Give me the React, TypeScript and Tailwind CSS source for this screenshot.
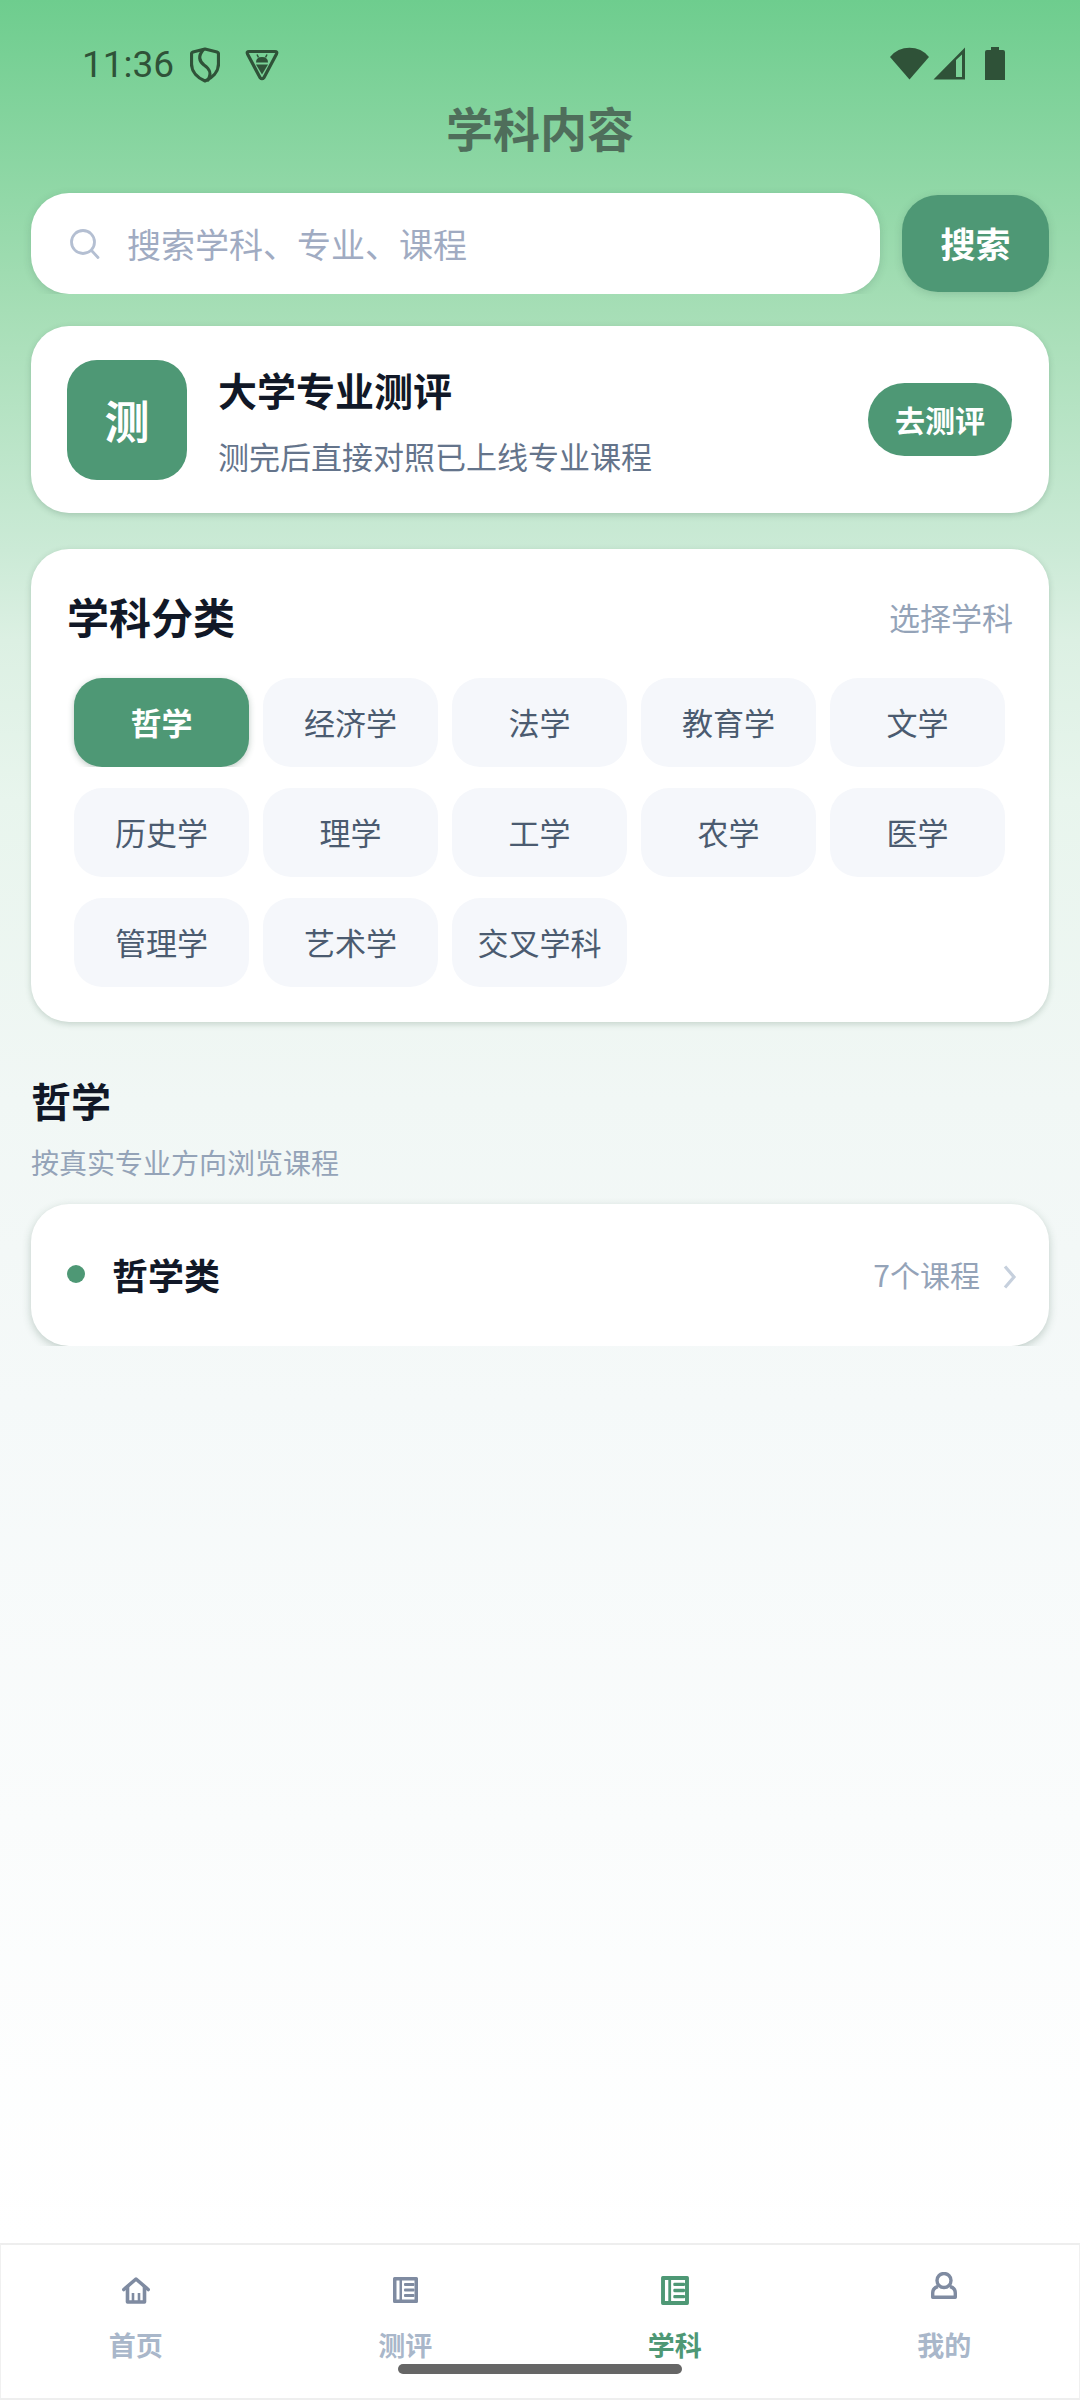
const chips = ["哲学","经济学","法学","教育学","文学","历史学","理学","工学","农学","医学","管理学","艺术学","交叉学科"];
const cjk = { fontFamily: '"Noto Sans CJK SC", "Noto Sans", sans-serif' };

function Shield() {
  return (
    <svg width="30" height="36" viewBox="0 0 30 36" fill="none" stroke="#2f5238" strokeWidth="3.2" strokeLinejoin="round" strokeLinecap="round">
      <path d="M15 2 L27 5 Q28.5 5.500 28.5 7 V17 C28.5 25 22 31 15 34 C8 31 1.500 25 1.500 17 V7 Q1.500 5.500 3 5 Z" />
      <path d="M13 3 C8 9 9 14 14 18 C20 22 22 26 18 33" />
    </svg>
  );
}
function TriDroid() {
  return (
    <svg width="34" height="32" viewBox="0 0 34 32" fill="none">
      <path d="M4 2.500 H30 Q32.500 2.500 31.500 5 L19 28.500 Q17 31 15 28.500 L2.500 5 Q1.500 2.500 4 2.500 Z" stroke="#2f5238" strokeWidth="3.200" strokeLinejoin="round" />
      <path d="M11 13.500 Q11 8 17 8 Q23 8 23 13.500 Z" fill="#2f5238" />
      <path d="M11 15.500 H23 L17 25.500 Z" fill="#2f5238" />
      <path d="M12 5.500 L13.500 8.500 M22 5.500 L20.500 8.500" stroke="#2f5238" strokeWidth="1.500" />
    </svg>
  );
}
function StatusRight() {
  return (
    <div className="flex items-center">
      <svg width="39" height="33" viewBox="0 0 39 33"><path d="M19.500 32.500 L0 10 A25 25 0 0 1 39 10 Z" fill="#2f5238" /></svg>
      <svg className="ml-[4px]" width="33" height="33" viewBox="0 0 33 33">
        <path d="M32 0.500 V32.500 H0.500 Z M23 13 V30 H29 V7.500 Z" fillRule="evenodd" fill="#2f5238" />
      </svg>
      <svg className="ml-[19px]" width="20" height="33" viewBox="0 0 20 33">
        <path d="M6 0 H14 V3 H18 Q20 3 20 5 V33 H0 V5 Q0 3 2 3 H6 Z" fill="#2f5238" />
      </svg>
    </div>
  );
}
function SearchIcon() {
  return (
    <svg width="30" height="30" viewBox="0 0 30 30" fill="none" stroke="#b4bfd2" strokeWidth="2.800" strokeLinecap="round">
      <circle cx="13" cy="13" r="11.500" />
      <path d="M21.500 21.500 L28 28.500" />
    </svg>
  );
}
function HomeIcon() {
  return (
    <svg width="28" height="27" viewBox="0 0 28 27" fill="none" stroke="#7f8ba1" strokeWidth="3.600" strokeLinejoin="round" strokeLinecap="round">
      <path d="M1.800 12.500 L14 2 L26.200 12.500" />
      <path d="M5.500 10 V25 H22.500 V10" />
      <path d="M11 25 V16 M17 25 V16" strokeWidth="2.600" strokeLinecap="butt" />
    </svg>
  );
}
function BookIcon({ color, w, h }: { color: string; w: number; h: number }) {
  return (
    <svg width={w} height={h} viewBox="0 0 25 26">
      <path fillRule="evenodd" fill={color} d="M1.500 0 H23.500 Q25 0 25 1.500 V24.500 Q25 26 23.500 26 H1.500 Q0 26 0 24.500 V1.500 Q0 0 1.500 0 Z M3.500 3.500 V22.500 H6.500 V3.500 Z M9 3.500 V22.500 H21.500 V3.500 Z" />
      <rect x="11" y="6" width="10.500" height="3" rx="1" fill={color} />
      <rect x="11" y="11.500" width="10.500" height="3" rx="1" fill={color} />
      <rect x="11" y="17" width="10.500" height="3" rx="1" fill={color} />
    </svg>
  );
}
function UserIcon() {
  return (
    <svg className="-translate-y-[5px]" width="26" height="27" viewBox="0 0 26 27" fill="none" stroke="#7f8ba1" strokeWidth="3.400">
      <circle cx="13" cy="8.500" r="7" />
      <path d="M7 14.500 Q1.700 16 1.700 21 V25.300 H24.300 V21 Q24.300 16 19 14.500" strokeLinejoin="round" />
    </svg>
  );
}
function Chevron() {
  return (
    <svg width="15" height="24" viewBox="0 0 15 24" fill="none" stroke="#c6d0dd" strokeWidth="3.200" strokeLinejoin="miter">
      <path d="M3 1.500 L12 12 L3 22.500" />
    </svg>
  );
}

export default function App() {
  return (
    <div
      className="relative flex h-[2400px] w-[1080px] flex-col overflow-hidden bg-[linear-gradient(180deg,#6ecd8e_0px,#a6deb6_310px,#cbead6_550px,#dcf0e3_640px,#e8f5ed_800px,#f1f7f5_1100px,#f5f9f9_1400px,#ffffff_2240px)]"
      style={cjk}
    >
      <div className="flex h-[100px] items-start justify-between pl-[82px] pr-[75px] pt-[47px]">
        <div className="flex items-center">
          <span className="w-[108px] text-[37px] leading-[34px] text-[#2f5238]" style={{ fontFamily: "Roboto, sans-serif" }}>11:36</span>
          <Shield />
          <span className="ml-[25px] flex"><TriDroid /></span>
        </div>
        <StatusRight />
      </div>
      <h1 className="-mt-[3px] mb-[3px] h-[60px] text-center text-[47px] font-bold leading-[60px] text-[#4f6e5b]">学科内容</h1>

      <div className="flex flex-col px-[31px]">
        <div className="mt-[33px] flex items-center">
          <div className="flex h-[101px] flex-1 items-center rounded-[38px] bg-white pl-[39px] shadow-[0_2px_8px_rgba(40,80,60,0.18)] [clip-path:inset(-12px_-12px_0_-12px)]">
            <SearchIcon />
            <span className="ml-[27px] text-[34px] leading-none text-[#a0abc2]">搜索学科、专业、课程</span>
          </div>
          <button className="ml-[22px] h-[97px] w-[147px] rounded-[36px] bg-[#4e9875] text-[35px] font-bold text-white shadow-[0_2px_8px_rgba(40,80,60,0.18)]">搜索</button>
        </div>

        <div className="mt-[32px] flex h-[187px] items-center rounded-[38px] bg-white pl-[36px] pr-[37px] shadow-[0_2px_6px_rgba(40,80,60,0.22)]">
          <div className="flex h-[120px] w-[120px] items-center justify-center rounded-[30px] bg-[#4e9875] text-[45px] font-bold text-white">测</div>
          <div className="ml-[31px] flex-1">
            <div className="text-[39px] font-bold leading-[50px] text-[#111827]">大学专业测评</div>
            <div className="mt-[22px] text-[31px] leading-[40px] text-[#64748b]">测完后直接对照已上线专业课程</div>
          </div>
          <button className="h-[73px] w-[144px] rounded-full bg-[#4e9875] text-[30px] font-bold text-white">去测评</button>
        </div>

        <div className="mt-[36px] h-[473px] rounded-[38px] bg-white px-[36px] pt-[39px] shadow-[0_2px_6px_rgba(40,80,60,0.22)]">
          <div className="flex h-[56px] items-center justify-between">
            <span className="text-[42px] font-bold leading-none text-[#111827]">学科分类</span>
            <span className="text-[31px] leading-none text-[#94a3b8]">选择学科</span>
          </div>
          <div className="mx-[7px] mt-[34px] grid grid-cols-[repeat(5,175px)] gap-x-[14px] gap-y-[21px]">
            {chips.map((c, i) => (
              <div
                key={c}
                className={
                  i === 0
                    ? "flex h-[89px] items-center justify-center rounded-[28px] bg-[#4e9875] text-[31px] font-bold text-white shadow-[0_2px_6px_rgba(40,80,60,0.3)] [clip-path:inset(-10px_-10px_0_-10px)]"
                    : "flex h-[89px] items-center justify-center rounded-[28px] bg-[#f5f7fb] text-[31px] text-[#4b5b70]"
                }
              >
                {c}
              </div>
            ))}
          </div>
        </div>

        <h2 className="mt-[50px] text-[40px] font-bold leading-[56px] text-[#111827]">哲学</h2>
        <p className="mt-[14px] text-[28px] leading-[40px] text-[#94a3b8]">按真实专业方向浏览课程</p>

        <div className="mx-[-31px] mt-[2px] overflow-hidden px-[31px] pt-[20px]">
          <div className="flex h-[142px] items-center rounded-[38px] bg-white pb-[3px] pl-[36px] pr-[32px] shadow-[0_3px_8px_rgba(40,80,60,0.25)]">
            <span className="h-[18px] w-[18px] rounded-full bg-[#4e9875]" />
            <span className="ml-[27px] flex-1 text-[36px] font-bold leading-none text-[#111827]">哲学类</span>
            <span className="text-[30px] leading-none text-[#94a3b8]">7个课程</span>
            <span className="ml-[22px] mt-[7px] flex"><Chevron /></span>
          </div>
        </div>
      </div>

      <nav className="mt-auto grid h-[157px] grid-cols-4 border-x border-y-2 border-x-[#f0f0f0] border-y-[#eeeeee] bg-white">
        {[
          { l: "首页", i: <HomeIcon />, c: "text-[#a9b7ca]" },
          { l: "测评", i: <BookIcon color="#7f8ba1" w={25} h={26} />, c: "text-[#a9b7ca]" },
          { l: "学科", i: <BookIcon color="#4e9875" w={28} h={29} />, c: "text-[#4e9875]" },
          { l: "我的", i: <UserIcon />, c: "text-[#a9b7ca]" },
        ].map((t) => (
          <div key={t.l} className="flex flex-col items-center">
            <div className="mt-[28px] flex h-[34px] items-center">{t.i}</div>
            <span className={"mt-[20px] text-[27px] font-bold leading-[36px] " + t.c}>{t.l}</span>
          </div>
        ))}
      </nav>
      <div className="absolute left-[398px] top-[2364px] h-[10px] w-[284px] rounded-full bg-[#666666]" />
    </div>
  );
}
